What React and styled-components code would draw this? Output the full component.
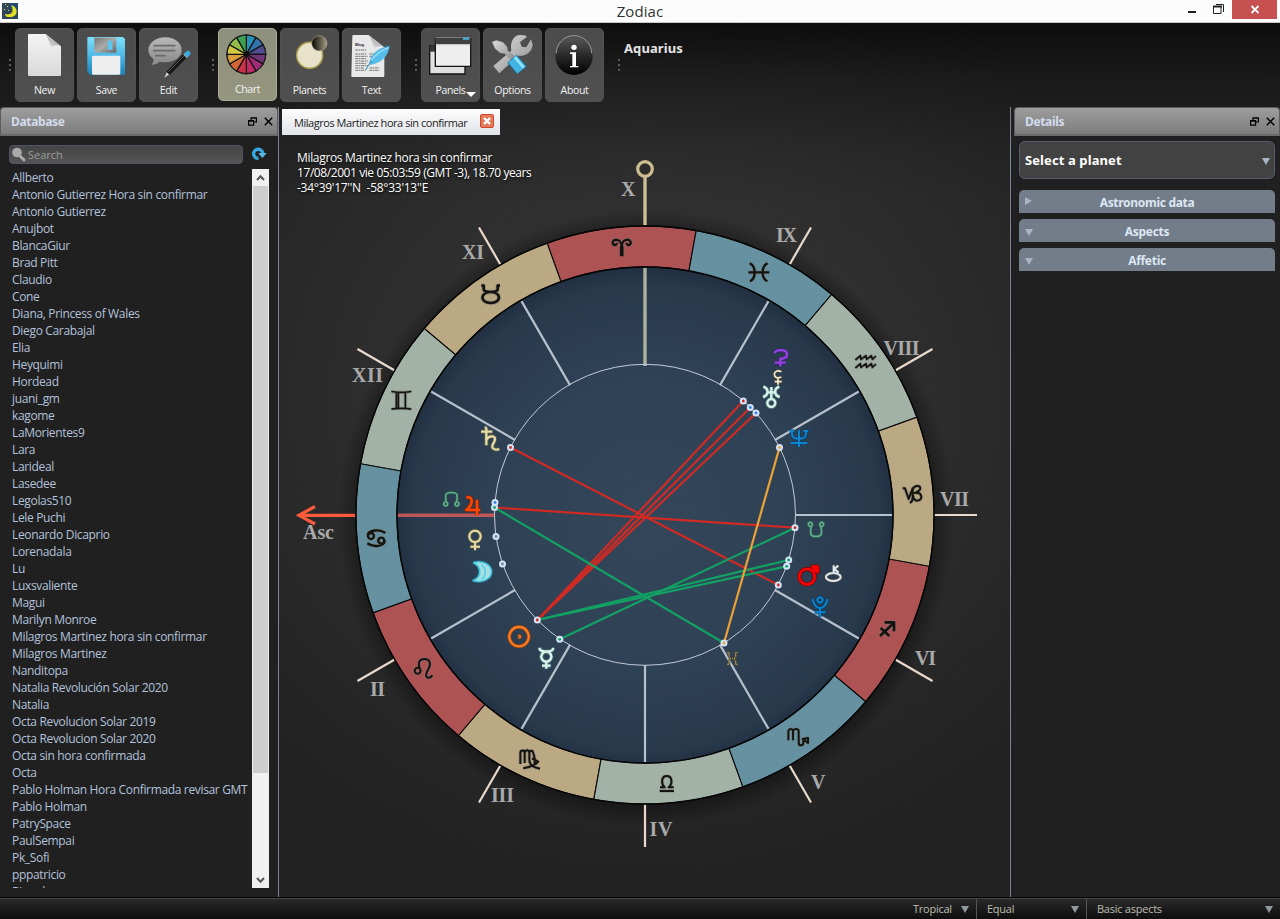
import React from "react";
import styled, { createGlobalStyle } from "styled-components";

const Global = createGlobalStyle`
  * { box-sizing: border-box; }
  html, body { margin: 0; padding: 0; background: #202020; overflow: hidden; }
  body { font-family: "Open Sans", "Noto Sans", sans-serif; font-size: 12px; }
`;

const Window = styled.div`
  width: 1280px; height: 919px; display: flex; flex-direction: column; overflow: hidden;
  background:
    linear-gradient(#fcfcfc 23px, rgba(8,8,8,.82) 23px, rgba(16,16,16,.45) 80px, rgba(20,20,20,.1) 150px, rgba(20,20,20,0) 200px),
    radial-gradient(ellipse 520px 480px at 645px 400px, #353535, #2e2e2e 50%, #222 100%);
`;
const TitleBar = styled.header`
  height: 23px; flex: none; display: grid; grid-template-columns: 140px 1fr 140px; align-items: start;
  background: #fcfcfc; border-bottom: 1px solid #c9c9c9;
`;
const AppIcon = styled.svg`width: 16px; height: 16px; margin: 3px 0 0 2px; display: block;`;
const AppTitle = styled.h1`
  margin: 0; text-align: center; font-weight: 400; font-size: 15px; line-height: 23px; color: #333; letter-spacing: .1px;
`;
const WindowControls = styled.div`display: flex; justify-content: flex-end; padding-right: 3px;`;

const Toolbar = styled.nav`height: 84px; flex: none; display: flex; padding: 5px 0 0 5px;`;
const Group = styled.div`display: flex; gap: 3px; margin-right: ${p => p.$after || 0}px;`;
const Grip = styled.i`
  width: 3px; height: 13px; margin: 31px ${p => p.$after ?? 1}px 0 ${p => p.$before ?? 5}px; flex: none;
  background: repeating-linear-gradient(#5c5c5c 0 2px, transparent 2px 5px) 0 0 / 2px 13px no-repeat;
`;
const ToolButton = styled.button`
  position: relative; width: 59px; height: ${p => (p.$active ? 73 : 74)}px; padding: 0; border: 1px solid ${p => (p.$active ? "#a9ab98" : "#525252")};
  border-radius: 5px; display: flex; flex-direction: column; align-items: center; justify-content: flex-start;
  background: ${p => (p.$active ? "linear-gradient(#8d907c, #95967f)" : "linear-gradient(#4c4c4c, #505050)")};
  color: #f2f2f2; font: 400 10.5px/14px "Open Sans", sans-serif; letter-spacing: -.35px;
  svg { display: block; flex: none; margin: -1px 0 ${p => (p.$active ? -1 : 0)}px; }
`;
const MenuArrow = styled.i`
  position: absolute; right: 3px; bottom: 4px; border: 5px solid transparent; border-top-color: #fff; border-bottom: 0;
`;
const SignName = styled.strong`
  margin: 11px 0 0 2px; color: #e4e4e4; font: 700 13px/18px "Noto Sans", sans-serif; letter-spacing: .1px;
`;

const Body = styled.div`height: 790px; flex: none; display: flex;`;
const Panel = styled.aside`
  width: ${p => p.$w}px; flex: none; display: flex; flex-direction: column; background: #202020;
`;
const PanelHeader = styled.div`
  height: 29px; flex: none; display: flex; align-items: center; padding: 1px 4px 0 10px; gap: 7px;
  border: 1px solid #5c5c5c; border-bottom: 2px solid #6a6a6a; border-radius: 4px 4px 0 0;
  background: linear-gradient(#9d9d9d, #7d7d7d);
  color: #d2dcec; font: 700 12px/18px "Noto Sans", sans-serif;
  span { flex: 1; letter-spacing: -.35px; padding-top: 1px; }
`;
const SearchRow = styled.div`display: flex; align-items: center; gap: 8px; height: 18px; margin: 9px 0 6px 9px;`;
const SearchBox = styled.div`
  width: 234px; height: 19px; border: 1px solid #4d5566; border-radius: 4px; display: flex; align-items: center; gap: 2px;
  background: linear-gradient(#444, #555); color: #9b9b9b; font-size: 11px; padding-left: 1px;
`;
const ListArea = styled.div`display: flex; height: 719px; margin-right: 9px;`;
const Names = styled.ul`
  list-style: none; flex: 1; min-width: 0; margin: 0; padding: 0 0 0 12px; overflow: hidden; color: #b3c2dc;
  font-size: 12px; line-height: 17px; letter-spacing: -.34px; white-space: nowrap;
`;
const Name = styled.li`height: 17px;`;
const Scrollbar = styled.div`
  width: 17px; background: #f0f0f0; display: flex; flex-direction: column; align-items: center;
  i { width: 15px; height: 587px; background: #cdcdcd; margin-bottom: 98px; }
  svg { display: block; }
`;
const Divider = styled.div`width: 1px; flex: none; background: #7b8494;`;
const Gutter = styled.div`width: 3px; flex: none; background: #202020;`;

const Main = styled.main`width: 731px; flex: none; display: flex; flex-direction: column; position: relative;`;
const Tabs = styled.div`height: 29px; flex: none; padding: 2px 0 0 3px;`;
const Tab = styled.div`
  width: 218px; height: 26px; display: flex; align-items: center; padding: 0 6px 2px 12px; background: linear-gradient(#fdfdfd, #e2e4e9);
  color: #1c1c1c; font-size: 11px; letter-spacing: -.46px; white-space: nowrap;
  span { flex: 1; padding-top: 3px; }
`;
const ChartInfo = styled.div`
  position: absolute; left: 18px; top: 43px; color: #fff; font-size: 12px; line-height: 15px; white-space: pre;
  text-shadow: 0 1px 3px #000;
`;
const InfoLine = styled.div`letter-spacing: ${p => p.$ls}px;`;
const ChartCanvas = styled.svg`display: block; width: 731px; height: 761px;`;

const Select = styled.div`
  height: 38px; margin: 5px 5px 11px; padding: 0 4px 0 5px; border: 1px solid #555e70; border-radius: 6px; background: #424242;
  display: flex; align-items: center; justify-content: space-between;
  color: #fff; font: 700 13px/18px "Noto Sans", sans-serif; letter-spacing: .1px;
`;
const Section = styled.div`
  height: 23px; margin: 0 5px 6px; border-radius: 5px 5px 0 0; background: #727d89; display: flex; align-items: center; padding: 1px 6px 0;
  color: #dce6f3; font: 700 12px/17px "Noto Sans", sans-serif; letter-spacing: -.3px;
  span { flex: 1; text-align: center; padding: 1px 8px 0 0; }
`;
const Caret = styled.i`
  width: 0; height: 0; flex: none; border: 4px solid transparent;
  ${p => (p.$right
    ? `border-left: 7px solid ${p.$color}; border-right: 0; margin-right: 1px; margin-top: -3px;`
    : `border-top: 7px solid ${p.$color}; border-bottom: 0; margin-top: 2px;`)}
`;
const StatusBar = styled.footer`
  height: 22px; flex: none; display: flex; justify-content: flex-end; border-top: 1px solid #050505; box-shadow: inset 0 1px #444;
  background: linear-gradient(#2b2b2b, #0e0e0e); color: #bdbdb0; font-size: 11px; letter-spacing: -.25px;
`;
const StatusItem = styled.div`
  width: ${p => p.$w}px; margin-top: 1px; display: flex; align-items: center; justify-content: space-between; padding: 0 7px 1px 10px;
  border-left: ${p => (p.$first ? 0 : "1px solid #555")};
`;

const names = ["Allberto", "Antonio Gutierrez Hora sin confirmar", "Antonio Gutierrez", "Anujbot", "BlancaGiur", "Brad Pitt", "Claudio", "Cone",
  "Diana, Princess of Wales", "Diego Carabajal", "Elia", "Heyquimi", "Hordead", "juani_gm", "kagome", "LaMorientes9", "Lara", "Larideal", "Lasedee",
  "Legolas510", "Lele Puchi", "Leonardo Dicaprio", "Lorenadala", "Lu", "Luxsvaliente", "Magui", "Marilyn Monroe", "Milagros Martinez hora sin confirmar",
  "Milagros Martinez", "Nanditopa", "Natalia Revolución Solar 2020", "Natalia", "Octa Revolucion Solar 2019", "Octa Revolucion Solar 2020",
  "Octa sin hora confirmada", "Octa", "Pablo Holman Hora Confirmada revisar GMT", "Pablo Holman", "PatrySpace", "PaulSempai", "Pk_Sofi", "pppatricio", "Ricardo"];

const CX = 645, CY = 515;
const polar = (r, deg) => {
  const a = (deg * Math.PI) / 180;
  return [CX + r * Math.cos(a), CY - r * Math.sin(a)];
};
const sector = (a) => {
  const p = [polar(289, a), polar(289, a + 30), polar(248, a + 30), polar(248, a)].map(q => q.map(n => n.toFixed(2)).join(" "));
  return `M${p[0]}A289 289 0 0 0 ${p[1]}L${p[2]}A248 248 0 0 1 ${p[3]}Z`;
};
const FIRE = "#ae5354", WATER = "#6591a0", AIR = "#a2b2a6", EARTH = "#baa982";

/* Glyph paths use thirds of a pixel, measured from the top left corner at (x, y). */
const signs = [
  { a: 79.8, c: FIRE, x: 611.7, y: 238.3, w: 7, d: "M30 53V26C30 9 19 4 12 4C2 5 1 16 6 19C11 22 16 18 14 14M30 26C30 9 41 4 48 4C58 5 59 16 54 19C49 22 44 18 46 14M30 24V54M28 24V54M32 24V54" },
  { a: 109.8, c: EARTH, x: 479.7, y: 284, w: 8, d: "M5 5H12V15C12 22 20 24 33 24C46 24 54 22 54 15V5H61M33 24C0 24 0 57 33 57C66 57 66 24 33 24" },
  { a: 139.8, c: AIR, x: 390.7, y: 390, w: 5, d: "M2 4C14 8 50 8 62 4M2 58C14 54 50 54 62 58M23 8V55M44 8V55M17 8V54" },
  { a: 169.8, c: WATER, x: 366.3, y: 529.3, w: 7, d: "M14 11A9 9 0 1 1 13.9 11M4 17C8 2 40-2 57 11M45 25A9 9 0 1 1 44.9 25M56 36C52 50 22 56 3 42" },
  { a: 199.8, c: FIRE, x: 413.7, y: 657.7, w: 6, d: "M12 30A9 9 0 1 1 11.9 30M20 36C12 22 13 4 32 4C50 4 53 20 44 34C36 48 34 60 45 60C51 60 54 57 55 52" },
  { a: 229.8, c: EARTH, x: 518.7, y: 749, w: 6, d: "M5 45V12C5 3 17 1 18 12V42M18 12C18 2 31 1 32 12V34C33 50 46 56 64 59M34 8C40 0 44 8 48 30V46M40 28L58 38C50 50 34 54 14 58" },
  { a: 259.8, c: AIR, x: 659, y: 774.7, w: 6, d: "M3 38H17C6 28 6 4 23 4C41 4 41 28 29 38H44M2 49H45" },
  { a: 289.8, c: WATER, x: 786.7, y: 727.7, w: 6, d: "M5 38V10C7 2 17 2 19 10V38M19 10C21 2 35 2 36 10V46C37 55 50 56 50 44V34H60M48 34L64 31V46Z" },
  { a: 319.8, c: FIRE, x: 878, y: 620.7, w: 8, d: "M6 46L46 8M20 5H48V32M8 22L34 46" },
  { a: 349.8, c: EARTH, x: 902, y: 484.3, w: 6, d: "M2 12H9L20 44L32 12V38C32 50 30 54 23 55M32 16C36 2 54 2 55 12C55 20 46 23 38 26C62 22 64 49 46 49C38 49 34 42 33 34" },
  { a: 19.8, c: AIR, x: 854.7, y: 354, w: 5, d: "M2 18L17 5L19 16L34 5L36 16L50 5L53 16L64 6M2 42L17 29L19 40L34 29L36 40L50 29L53 40L64 30" },
  { a: 49.8, c: WATER, x: 748.3, y: 262.3, w: 7, d: "M4 3C24 12 24 48 5 57M58 3C38 12 38 48 57 57M0 30H63" },
];

const planets = [
  { x: 480, y: 426.7, c: "#e6dca8", h: "#6b6444", w: 7, d: "M3 15H37M19 3V56M20 38C26 27 45 25 45 37C45 49 34 52 37 62C40 69 50 70 58 67M14 3H20" },
  { x: 442.7, y: 491, c: "#62ad8b", h: "#27584d", w: 5, d: "M9 33A6 6 0 1 1 8.9 33M43 33A6 6 0 1 1 42.9 33M12 33L9 27V12C12 2 40 2 43 12V27L40 33" },
  { x: 465, y: 495.7, c: "#ff4600", h: "#7a1d08", w: 8, d: "M4 6C14 2 21 8 20 17C19 28 12 37 4 43H46M36 12V58" },
  { x: 467.7, y: 529.3, c: "#e6dca4", h: "#6b6444", w: 6, d: "M22 4A17 17 0 1 1 21.9 4M22 38V63M8 52H37" },
  { x: 472.7, y: 561.3, c: "#48cde6", h: "#2b8ca8", w: 4, f: "#a7e0e4", d: "M2 4C32-4 56 12 56 31C56 50 32 66 2 58C28 46 28 16 2 4M26 10C42 22 42 42 26 54" },
  { x: 507.7, y: 625.7, c: "#ff7a22", h: "#a04600", w: 7, d: "M34 4A29 29 0 1 1 33.9 4M33 32A2 2 0 1 1 33 34" },
  { x: 538, y: 647, c: "#d6f5ea", h: "#5c7f80", w: 7, d: "M25 14A15 15 0 1 1 24.9 14M5 2V6C9 16 42 16 45 6V2M25 44V65M12 56H38" },
  { x: 773, y: 349, c: "#9443e2", h: "#3e2078", w: 7, d: "M5 13C5 1 41-1 42 15C43 26 32 30 22 29V52M5 41H38" },
  { x: 773, y: 370, c: "#f3ecd5", h: "#574a2a", w: 5, d: "M25 5C12-1 4 6 4 13C4 22 14 26 25 21M15 25V44M5 35H26" },
  { x: 762, y: 385.7, c: "#d6f5ea", h: "#5c7f80", w: 7, d: "M4 3C21 9 21 28 3 34M52 3C35 9 35 28 53 34M14 20H42M28 4V38M28 40A12 12 0 1 1 27.9 40" },
  { x: 789.3, y: 429.3, c: "#0b85cf", h: "#0a3e68", w: 6, d: "M1 5H14M43 5H57M8 5V15C8 33 50 33 50 15V5M29 3V53M4 41H54" },
  { x: 807.7, y: 521.7, c: "#62ad8b", h: "#27584d", w: 5, d: "M8 2A6 6 0 1 1 7.9 2M42 2A6 6 0 1 1 41.9 2M12 14L9 20V36C12 47 38 47 41 36V20L38 14" },
  { x: 797.7, y: 564.7, c: "#f80000", h: "#7c0202", w: 8, d: "M28 13A23 23 0 1 1 27.9 13M43 22L56 9M44 6H60V22Z" },
  { x: 825, y: 564.3, c: "#dfe8f4", h: "#5a5137", w: 6, d: "M25 26A22 12 0 1 1 24.9 26M26 3V26M40 4L28 14L41 25" },
  { x: 811.7, y: 596.7, c: "#0b85cf", h: "#0a3e68", w: 6, d: "M25 2A8 8 0 1 1 24.9 2M2 7C6 14 6 34 25 34C44 34 44 14 48 7M25 34V61M9 47H42" },
  { x: 726, y: 652, c: "#a3935a", h: "#4d4529", w: 3, d: "M3 2H9V14L13 18V22L9 26V37H3M35 2H29V14L25 18V22L29 26V37H35M18 20H21" },
];

const RED = "#d02a23", GREEN = "#12a263", ORANGE = "#eba236", BLUE = "#3b82f0";
const aspects = [
  [537.3, 620, 743.3, 401, RED], [537.3, 620, 750.3, 407.5, RED], [537.3, 620, 756, 413, RED],
  [494.5, 507.5, 795, 527.7, RED], [510.5, 447.5, 778.3, 585, RED],
  [494.5, 507.5, 724, 643, GREEN], [537.3, 620, 788.7, 560, GREEN], [537.3, 620, 786.7, 566.3, GREEN], [559.7, 639.3, 795, 527.7, GREEN],
  [779.5, 447.5, 724, 643, ORANGE],
];
const points = [[510.5, 447.5, RED], [495, 502.5, BLUE], [494.5, 507.5, GREEN], [496, 536.5, "#7088a8"], [502.5, 564, "#7088a8"], [537.3, 620, RED],
  [559.7, 639.3, GREEN], [743.3, 401, RED], [750.3, 407.5, BLUE], [756, 413, BLUE], [779.5, 447.5, ORANGE], [795, 527.7, RED], [788.7, 560, GREEN],
  [786.7, 566.3, GREEN], [778.3, 585, RED], [724, 643, ORANGE]];
const houses = [["X", 621, 195.5, 13], ["XI", 462, 258.5, 22], ["XII", 352, 381.5, 31], ["IX", 776, 241.5, 21], ["VIII", 883.5, 354.5, 36], ["VII", 940, 505.5, 29],
  ["VI", 915, 664.5, 21], ["V", 811, 788.5, 14], ["IV", 649.5, 835.5, 23], ["III", 491, 801.5, 23], ["II", 370, 695.5, 15], ["Asc", 303, 538.5, 31]];

const Glyph = ({ x, y, d, c, h, w, f = "none", ho = 0.75 }) => (
  <g transform={`translate(${x} ${y}) scale(.3333)`} fill="none" strokeLinejoin="round">
    <path d={d} stroke={h} strokeWidth={w + 5} strokeOpacity={ho} />
    <path d={d} stroke={c} strokeWidth={w} fill={f} />
  </g>
);

function Chart() {
  return (
    <ChartCanvas viewBox="279 136 731 761">
      <defs>
        <radialGradient id="disc" cx="645" cy="518" r="251" gradientUnits="userSpaceOnUse">
          <stop offset="0" stopColor="#34465a" /><stop offset=".6" stopColor="#2f4155" /><stop offset=".93" stopColor="#28394c" /><stop offset="1" stopColor="#202f40" />
        </radialGradient>
        <radialGradient id="halo" cx="646" cy="518" r="308" gradientUnits="userSpaceOnUse">
          <stop offset=".92" stopColor="#000" stopOpacity=".42" /><stop offset="1" stopColor="#000" stopOpacity="0" />
        </radialGradient>
      </defs>
      <circle cx="646" cy="518" r="308" fill="url(#halo)" />
      <circle cx={CX} cy={CY} r="248" fill="url(#disc)" />
      {[...Array(12)].map((_, i) => {
        if (i === 3 || i === 6) return null;
        const [a, b] = polar(289, i * 30), [c, d] = polar(332, i * 30), [e, f] = polar(150, i * 30), [g, h] = polar(247, i * 30);
        return (
          <g key={i} strokeWidth="2.2">
            <line x1={a} y1={b} x2={c} y2={d} stroke="#e9dacd" />
            <line x1={e} y1={f} x2={g} y2={h} stroke="#b7c1cd" />
          </g>
        );
      })}
      <path d="M645 366V267" stroke="#abb29e" strokeWidth="3.4" />
      <path d="M645 226V177" stroke="#cdbf92" strokeWidth="3.4" />
      <circle cx="645" cy="169" r="7.3" fill="none" stroke="#cdbf92" strokeWidth="3.2" />
      <path d="M397 515.3H495" stroke="#bd5758" strokeWidth="3.6" />
      <path d="M356 515.3H298M315 506.5L299 515.3L315 524" fill="none" stroke="#fa5c3b" strokeWidth="3.2" />
      {signs.map(s => <path key={s.a} d={sector(s.a)} fill={s.c} stroke="#080808" strokeWidth="1.1" />)}
      <circle cx={CX} cy={CY} r="289" fill="none" stroke="#050505" strokeWidth="1.3" />
      <circle cx={CX} cy={CY} r="248" fill="none" stroke="#050505" strokeWidth="1.4" />
      {houses.map(([t, x, y, w]) => (
        <text key={t} x={x} y={y} textLength={w} fill="#a9a9a9" fontFamily="Liberation Serif, serif" fontWeight="700" fontSize="20">{t}</text>
      ))}
      {signs.map(s => <Glyph key={s.a} {...s} c="#15130f" h="#777" ho={0.5} />)}
      <circle cx={CX} cy="514.8" r="150.5" fill="none" stroke="#c2ccd8" strokeWidth="1" />
      {aspects.map(([a, b, c, d, col], i) => <line key={i} x1={a} y1={b} x2={c} y2={d} stroke={col} strokeWidth="2.2" />)}
      {planets.map((p, i) => <Glyph key={i} {...p} />)}
      {points.map(([x, y, c], i) => (
        <g key={i}><circle cx={x} cy={y} r="3.5" fill="#d3e3f5" /><circle cx={x} cy={y} r="1.4" fill={c} /></g>
      ))}
    </ChartCanvas>
  );
}

const Icon = ({ children }) => <svg width="59" height="55" viewBox="0 0 177 165">{children}</svg>;

const NewIcon = () => (
  <Icon>
    <defs>
      <linearGradient id="page" x2="0" y2="1"><stop stopColor="#f4f4f4" /><stop offset="1" stopColor="#d9d9d9" /></linearGradient>
      <linearGradient id="fold" x1="0" y1="1" x2="1" y2="0"><stop stopColor="#eee" /><stop offset=".5" stopColor="#b5b5b5" /><stop offset="1" stopColor="#777" /></linearGradient>
    </defs>
    <path d="M42 18H92L138 55V141Q138 144 135 144H42Q39 144 39 141V21Q39 18 42 18Z" fill="url(#page)" />
    <path d="M90 19C101 30 101 45 110 56Q125 48 138 55Z" fill="url(#fold)" />
  </Icon>
);
const SaveIcon = () => (
  <Icon>
    <defs><linearGradient id="disk" x2="0" y2="1"><stop stopColor="#7fe0fb" /><stop offset=".5" stopColor="#4bb8e6" /><stop offset="1" stopColor="#1c7fb4" /></linearGradient>
      <linearGradient id="metal" x2="1" y2="1"><stop stopColor="#777" /><stop offset=".5" stopColor="#aaa" /><stop offset="1" stopColor="#666" /></linearGradient></defs>
    <path d="M31 30Q31 27 34 27H138L144 33V138Q144 141 141 141H40L31 132Z" fill="url(#disk)" />
    <rect x="52" y="29" width="66" height="45" fill="url(#metal)" /><rect x="92" y="38" width="14" height="27" fill="#5bc8ee" />
    <rect x="45" y="83" width="85" height="57" rx="4" fill="#eee" />
  </Icon>
);
const EditIcon = () => (
  <Icon>
    <defs><linearGradient id="bub" x2="0" y2="1"><stop stopColor="#b9b9b9" /><stop offset="1" stopColor="#888" /></linearGradient></defs>
    <path d="M79 28C108 28 128 46 128 66C128 88 106 103 79 103C73 103 67 102 62 101C56 107 46 111 37 110C43 105 44 99 43 93C34 86 28 77 28 66C28 46 50 28 79 28Z" fill="url(#bub)" />
    <path d="M46 53H107M44 68H107M50 83H79" stroke="#6b6b6b" strokeWidth="5" strokeLinecap="round" />
    <path d="M76 149L84 132L91 139Z" fill="#ddd" /><path d="M87 136L138 84" stroke="#161616" strokeWidth="14" /><path d="M87 132L136 83" stroke="#777" strokeWidth="2" />
    <path d="M138 85L143 80" stroke="#bbb" strokeWidth="14" /><path d="M144 79L147 76" stroke="#3ba9e4" strokeWidth="15" strokeLinecap="round" />
  </Icon>
);
const hues = ["#2590b4", "#3273ae", "#514c92", "#713579", "#9f2c78", "#c02a68", "#c83247", "#d4663a", "#d99c3c", "#d3c640", "#94bd45", "#3a9f50"];
const WheelIcon = () => (
  <Icon>
    {hues.map((c, i) => {
      const p = a => `${85 + 58 * Math.sin((a * Math.PI) / 180)} ${79 - 58 * Math.cos((a * Math.PI) / 180)}`;
      return <path key={c} d={`M85 79L${p(i * 30)}A58 58 0 0 1 ${p(i * 30 + 30)}Z`} fill={c} stroke="#111" strokeWidth="3.6" />;
    })}
    <circle cx="85" cy="79" r="58.5" fill="none" stroke="#222" strokeWidth="3" /><circle cx="85" cy="79" r="6" fill="#111" />
  </Icon>
);
const PlanetsIcon = () => (
  <Icon>
    <defs><linearGradient id="moon" x2="1"><stop stopColor="#050505" /><stop offset="1" stopColor="#a59b83" /></linearGradient></defs>
    <circle cx="89" cy="82" r="39" fill="#e9e2ca" stroke="#ada04c" strokeWidth="4.5" /><circle cx="118" cy="46" r="23" fill="url(#moon)" stroke="#c7bd9a" strokeWidth="1.5" />
  </Icon>
);
const TextIcon = () => (
  <Icon>
    <path d="M31 24Q31 21 34 21H80L127 58V144Q127 147 124 147H31Q28 147 28 144Z" fill="#e8e8e8" /><path d="M79 22C91 34 90 47 98 59Q115 50 127 58Z" fill="url(#fold)" />
    <text x="39" y="54" fontFamily="Liberation Sans, sans-serif" fontSize="13" fontWeight="700" fill="#333">Blog</text>
    <path d="M40 66H74M40 78H74M40 85H77M40 92H74M40 99H78M40 106H74M40 113H78M40 120H66M40 127H70M82 78H105M82 85H95M82 127H112M82 120H112" stroke="#777" strokeWidth="3" strokeDasharray="9 1.5 5 1.5" />
    <path d="M143 53C139 82 122 105 82 111C80 84 105 58 143 53Z" fill="#55bdea" />
    <path d="M143 53C118 65 94 85 71 126" fill="none" stroke="#2383b7" strokeWidth="3" /><path d="M139 59C126 62 102 78 88 98" fill="none" stroke="#a6e4fb" strokeWidth="4" />
  </Icon>
);
const PanelsIcon = () => (
  <Icon>
    <path d="M26 53H132V138H26Z" fill="#e0e0e0" stroke="#111" strokeWidth="4" /><path d="M26 52H60V71H26Z" fill="#383838" />
    <path d="M43 28H149V115H43Z" fill="#eee" stroke="#151515" strokeWidth="4" /><path d="M43 27H149V48H43Z" fill="#3e4042" /><path d="M43 28H149" stroke="#888" strokeWidth="3" /><path d="M126 32H145" stroke="#4aacd2" strokeWidth="7" />
    <path d="M46 50H146" stroke="#aaa" strokeWidth="2" />
  </Icon>
);
const OptionsIcon = () => (
  <Icon>
    <defs><linearGradient id="steel" x2="1" y2="1"><stop stopColor="#ddd" /><stop offset="1" stopColor="#8e8e8e" /></linearGradient></defs>
    <path d="M31 114L85 68C81 48 88 25 108 21L126 22L132 27L111 42L116 56L130 58L144 34L149 50C147 72 128 86 105 83L49 136Z" fill="url(#steel)" />
    <path d="M27 42L40 37L60 43L72 56L75 68L95 86L86 96L65 77L52 75L36 62Z" fill="url(#steel)" stroke="#777" />
    <path d="M87 92L117 127" stroke="#1b6e9c" strokeWidth="37" /><path d="M88 93L116 126" stroke="#42b4e3" strokeWidth="33" /><path d="M95 87L122 119" stroke="#94e5ff" strokeWidth="8" />
  </Icon>
);
const AboutIcon = () => (
  <Icon>
    <defs><linearGradient id="orb" x2="0" y2="1"><stop stopColor="#555" /><stop offset=".5" stopColor="#272727" /><stop offset="1" stopColor="#000" /></linearGradient></defs>
    <circle cx="87" cy="85" r="56" fill="url(#orb)" /><path d="M34 76A53 53 0 0 1 140 76" fill="none" stroke="#aaa" strokeWidth="2.5" />
    <circle cx="87" cy="58" r="8" fill="#fff" /><path d="M75 73H93V114H100V118H75V114H82V78H75Z" fill="#fff" />
  </Icon>
);

const Float = () => (
  <svg width="9" height="9" viewBox="0 0 9 9"><path d="M3 3V.9H8.4V5H6M.6 3.6H5.6V8.2H.6ZM3 1.2H8.4M.6 4.2H5.6" fill="none" stroke="#000" strokeWidth="1.2" /></svg>
);
const Cross = () => <svg width="9" height="9" viewBox="0 0 9 9"><path d="M.8.8L8.2 8.2M8.2.8L.8 8.2" stroke="#000" strokeWidth="1.5" /></svg>;

export default function App() {
  return (
    <Window>
      <Global />
      <TitleBar>
        <AppIcon viewBox="0 0 16 16"><rect width="16" height="16" fill="#31465a" /><rect x="8" width="8" height="6" fill="#1f4c74" /><path d="M9 2C17 4 17 15 6 14C4 14 3 12 3 11C11 13 12 7 9 2Z" fill="#e3df24" /><path d="M5 3h1v1H5zM2 6h1v1H2zM6 7h1v1H6zM3 1h1v1H3z" fill="#dcd94a" /></AppIcon>
        <AppTitle>Zodiac</AppTitle>
        <WindowControls>
          <svg width="92" height="19" viewBox="0 0 92 19">
            <rect x="47" width="45" height="19" fill="#c75050" />
            <path d="M3 12H11" stroke="#222" strokeWidth="2" />
            <path d="M29 6.5H36V13.5H28.5V6.5Z" fill="none" stroke="#222" /><path d="M28 6.5H37" stroke="#222" strokeWidth="2" /><path d="M31 4.5H38.5V12" fill="none" stroke="#222" />
            <path d="M66.5 6L73.5 13M73.5 6L66.5 13" stroke="#fff" strokeWidth="1.8" />
          </svg>
        </WindowControls>
      </TitleBar>

      <Toolbar>
        <Grip $before={4} $after={3} />
        <Group $after={9}>
          <ToolButton><NewIcon />New</ToolButton><ToolButton><SaveIcon />Save</ToolButton><ToolButton><EditIcon />Edit</ToolButton>
        </Group>
        <Grip $after={3} />
        <Group $after={9}>
          <ToolButton $active><WheelIcon />Chart</ToolButton><ToolButton><PlanetsIcon />Planets</ToolButton><ToolButton><TextIcon />Text</ToolButton>
        </Group>
        <Grip $after={3} />
        <Group $after={9}>
          <ToolButton><PanelsIcon />Panels<MenuArrow /></ToolButton><ToolButton><OptionsIcon />Options</ToolButton><ToolButton><AboutIcon />About</ToolButton>
        </Group>
        <Grip $after={1} />
        <SignName>Aquarius</SignName>
      </Toolbar>

      <Body>
        <Panel $w={278}>
          <PanelHeader><span>Database</span><Float /><Cross /></PanelHeader>
          <SearchRow>
            <SearchBox>
              <svg width="15" height="15" viewBox="0 0 15 15"><path d="M8 8L13 13" stroke="#aaa" strokeWidth="3" strokeLinecap="round" /><circle cx="6" cy="5.5" r="4.8" fill="#aaa" /></svg>
              Search
            </SearchBox>
            <svg width="16" height="14" viewBox="0 0 16 14"><path d="M7.5 11.4A4.6 4.6 0 1 1 11.8 7" fill="none" stroke="#3aa5dc" strokeWidth="3.4" /><path d="M7.2 6H15.8L11.3 11Z" fill="#5ab9e5" /></svg>
          </SearchRow>
          <ListArea>
            <Names>{names.map(n => <Name key={n}>{n}</Name>)}</Names>
            <Scrollbar>
              <svg width="17" height="17"><path d="M5 11L8.5 7.3L12 11" fill="none" stroke="#555" strokeWidth="2" /></svg>
              <i />
              <svg width="17" height="17"><path d="M5 7L8.5 10.7L12 7" fill="none" stroke="#555" strokeWidth="2" /></svg>
            </Scrollbar>
          </ListArea>
        </Panel>
        <Divider />
        <Main>
          <Tabs>
            <Tab>
              <span>Milagros Martinez hora sin confirmar</span>
              <svg width="14" height="14" viewBox="0 0 14 14"><rect x=".5" y=".5" width="13" height="13" rx="1.5" fill="#e27a5c" stroke="#d5452c" /><path d="M4 4L10 10M10 4L4 10" stroke="#fff" strokeWidth="2.4" /></svg>
            </Tab>
          </Tabs>
          <Chart />
          <ChartInfo>
            <InfoLine $ls={-0.33}>Milagros Martinez hora sin confirmar</InfoLine>
            <InfoLine $ls={-0.42}>17/08/2001 vie 05:03:59 (GMT -3), 18.70 years</InfoLine>
            <InfoLine $ls={-0.27}>{"-34°39'17''N  -58°33'13''E"}</InfoLine>
          </ChartInfo>
        </Main>
        <Divider />
        <Gutter />
        <Panel $w={266}>
          <PanelHeader><span>Details</span><Float /><Cross /></PanelHeader>
          <Select>Select a planet<Caret $color="#a9b5c6" /></Select>
          <Section><Caret $right $color="#a9b5c6" /><span>Astronomic data</span></Section>
          <Section><Caret $color="#a9b5c6" /><span>Aspects</span></Section>
          <Section><Caret $color="#a9b5c6" /><span>Affetic</span></Section>
        </Panel>
      </Body>

      <StatusBar>
        <StatusItem $w={73} $first>Tropical<Caret $color="#8f9a9a" /></StatusItem>
        <StatusItem $w={110}>Equal<Caret $color="#8f9a9a" /></StatusItem>
        <StatusItem $w={194}>Basic aspects<Caret $color="#8f9a9a" /></StatusItem>
      </StatusBar>
    </Window>
  );
}
